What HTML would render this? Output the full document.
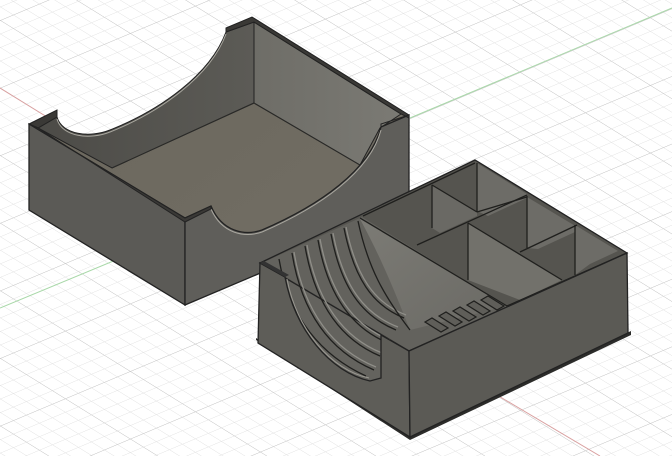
<!DOCTYPE html>
<html><head><meta charset="utf-8"><style>
html,body{margin:0;padding:0;background:#fff;overflow:hidden}
svg{display:block}
</style></head><body>
<svg width="672" height="456" viewBox="0 0 672 456" xmlns="http://www.w3.org/2000/svg">
<defs>
<pattern id="minor" width="13" height="13" patternUnits="userSpaceOnUse" patternTransform="matrix(1 0.62 1 -0.42 0 88)">
<path d="M0 0H13M0 0V13" stroke="#dedede" stroke-width="0.8" fill="none"/>
</pattern>
<pattern id="major" width="65" height="65" patternUnits="userSpaceOnUse" patternTransform="matrix(1 0.62 1 -0.42 0 88)">
<path d="M0 0H65M0 0V65" stroke="#c4c4c4" stroke-width="0.9" fill="none"/>
</pattern>
<linearGradient id="g1" x1="0" y1="0" x2="1" y2="0"><stop offset="0" stop-color="#4c4b47"/><stop offset="1" stop-color="#5c5b56"/></linearGradient>
<linearGradient id="g2" x1="0" y1="0" x2="1" y2="0"><stop offset="0" stop-color="#6e6d67"/><stop offset="1" stop-color="#7b7a74"/></linearGradient>
<linearGradient id="g3" x1="0" y1="0" x2="1" y2="1"><stop offset="0" stop-color="#6a665c"/><stop offset="1" stop-color="#736f65"/></linearGradient>
<linearGradient id="g4" x1="0" y1="0" x2="1" y2="1"><stop offset="0" stop-color="#7c7b75"/><stop offset="1" stop-color="#6a6964"/></linearGradient>
</defs>
<rect width="672" height="456" fill="#fff"/>
<rect width="672" height="456" fill="url(#minor)"/>
<rect width="672" height="456" fill="url(#major)"/>
<line x1="0" y1="88" x2="60" y2="125" stroke="#d9a0a0" stroke-width="1"/>
<line x1="480" y1="385" x2="600" y2="456" stroke="#d9a0a0" stroke-width="1"/>
<line x1="0" y1="308" x2="140" y2="250" stroke="#a8d8a8" stroke-width="1"/>
<line x1="410" y1="118" x2="672" y2="8" stroke="#a8d8a8" stroke-width="1"/>

<!-- Box 1 -->
<path d="M38,128 L57,117 C62,135 90,138 110,130 C160,110 210,75 226,32 L254,22 L401,114 L409,118 L409,200 L185,300 Z" fill="url(#g3)"/>
<path d="M38,128 L57,117 C62,135 90,138 110,130 C160,110 210,75 226,32 L254,22 L254,103 L112,168 Z" fill="url(#g1)" stroke="#222" stroke-width="1"/>
<path d="M254,22 L401,114 L380,128 L360,165 L254,103 Z" fill="url(#g2)" stroke="#222" stroke-width="1"/>
<path d="M112,168 L254,103 L360,165" fill="none" stroke="#2a2a28" stroke-width="1"/>
<path d="M29,124 L185,218 L185,305 L29,210 Z" fill="#5b5a56" stroke="#222" stroke-width="1.3"/>
<path d="M185,218 L211,206 C222,232 245,236 262,230 C320,205 370,170 381,127 L409,115 L409,210 L185,305 Z" fill="#5f5e5a" stroke="#222" stroke-width="1.3"/>
<path d="M211,209 C222,234 245,238 262,232 C320,207 370,172 381,130" fill="none" stroke="#a9a79f" stroke-width="1"/>
<path d="M57,119 C62,137 90,140 110,132 C160,112 210,77 226,34" fill="none" stroke="#a9a79f" stroke-width="1"/>
<path d="M29,124 L57,110 L57,117 L38,128 Z" fill="#3a3936" stroke="#222"/>
<path d="M226,32 L226,28 L252,17 L409,115 L409,118 L401,114 L254,22 Z" fill="#3a3936" stroke="#222"/>
<path d="M29,124 L185,218 L211,206 L211,209 L185,222 L38,128 Z" fill="#3a3936" stroke="#222"/>
<path d="M381,127 L381,124 L409,115" fill="none" stroke="#222"/>

<!-- Box 2 -->
<path d="M256,340 L410,440 L631,335 L631,331 L410,436 L256,338 Z" fill="#2c2c2a"/>
<path d="M260,263 L409,351 L410,437 L258,343 Z" fill="#64635e"/>
<path d="M260,263 L475,160 L627,253 L409,351 Z" fill="#55544f" stroke="#222" stroke-width="1.3"/>
<path d="M262,263 L362,217 L507,306 L409,350 Z" fill="#63625d"/>
<path d="M477,163 L527,194 L527,198 L488,216 L477,211 Z" fill="#6d6c67"/>
<path d="M432,185 L477,212 L477,216 L440,233 L432,228 Z" fill="#6a6964"/>
<path d="M527,197 L577,227 L575,232 L538,249 L527,248 Z" fill="#6d6c67"/>
<path d="M575,225 L618,251 L590,264 L575,275 Z" fill="#6d6c67"/>
<path d="M468,223 L562,280 L520,300 L468,280 Z" fill="#72716b"/>
<path d="M360,219 L507,306 L410,330 C400,305 385,265 360,219 Z" fill="url(#g4)"/>
<g stroke="#1f1f1d" stroke-width="1.3" fill="none">
<path d="M360,218 L507,306"/>
<path d="M432,185 L477,212"/>
<path d="M417,245 L527,195"/>
<path d="M468,223 L562,280"/>
<path d="M520,252 L577,225"/>
<path d="M432,185 L432,228"/>
<path d="M477,163 L477,212"/>
<path d="M527,196 L527,248"/>
<path d="M468,223 L468,280"/>
<path d="M575,225 L575,275"/>
<path d="M363,216 L475,163"/>
<path d="M477,212 L527,197"/>
<path d="M507,306 L627,253"/>
</g>
<g stroke="#1f1f1d" stroke-width="1.2" fill="#5f5e59">
<path d="M425,322 L432,318 L448,328 L441,332 Z"/>
<path d="M439,316 L446,312 L462,322 L455,326 Z"/>
<path d="M453,311 L460,307 L476,317 L469,321 Z"/>
<path d="M467,305 L474,301 L490,311 L483,315 Z"/>
<path d="M481,300 L488,296 L504,306 L497,310 Z"/>
</g>
<g fill="none" stroke-width="1.3">
<path d="M279,259 C289,318 322,356 366,376" stroke="#1f1f1d"/>
<path d="M292,253 C302,315 332,352 374,370" stroke="#1f1f1d"/>
<path d="M294,252 C304,313 334,350 376,367" stroke="#8f8e88"/>
<path d="M305,246 C315,305 342,340 380,356" stroke="#1f1f1d"/>
<path d="M307,245 C317,303 344,338 382,353" stroke="#8f8e88"/>
<path d="M318,240 C328,296 352,328 388,343" stroke="#1f1f1d"/>
<path d="M320,239 C330,294 354,326 390,340" stroke="#8f8e88"/>
<path d="M331,234 C341,288 362,316 396,330" stroke="#1f1f1d"/>
<path d="M333,233 C343,286 364,314 398,327" stroke="#8f8e88"/>
<path d="M344,228 C354,278 372,305 404,318" stroke="#1f1f1d"/>
<path d="M346,227 C356,276 374,303 406,315" stroke="#8f8e88"/>
<path d="M358,221 C368,268 384,296 410,330" stroke="#1f1f1d"/>
</g>
<path d="M260,263 L285,277 C295,330 330,372 370,381 L381,378 L381,335 L409,351 L410,437 L258,343 Z" fill="#5e5d58" stroke="#222" stroke-width="1.3"/>
<path d="M287,279 C297,330 331,370 369,378" fill="none" stroke="#9a9891" stroke-width="1"/>
<path d="M409,351 L627,253 L628,333 L410,437 Z" fill="#5b5a55" stroke="#222" stroke-width="1.3"/>
<path d="M260,263 L285,277 L289,275 L264,261 Z" fill="#333"/>
</svg>
</body></html>
